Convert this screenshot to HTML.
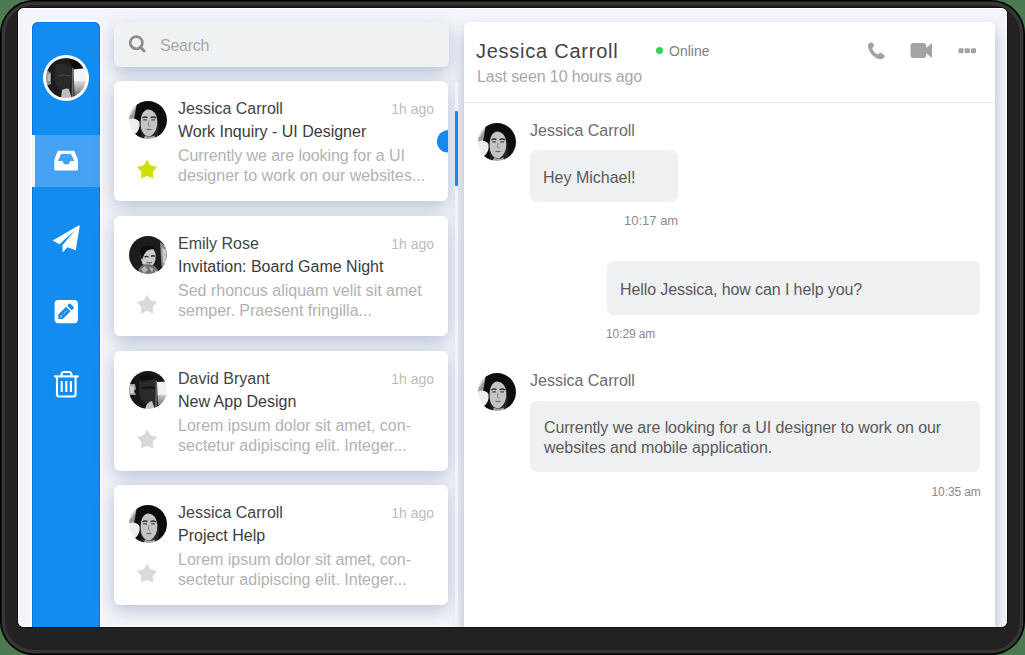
<!DOCTYPE html>
<html><head><meta charset="utf-8">
<style>
*{box-sizing:border-box;margin:0;padding:0}
html,body{width:1025px;height:655px;overflow:hidden;background:#4c7a51}
body{font-family:"Liberation Sans",sans-serif;position:relative}
.abs{position:absolute}
#frame{left:0;top:0;width:1025px;height:655px;border-radius:34px;background:#363636;box-shadow:inset 0 0 0 1.6px #000}
#frame2{left:5px;top:5px;width:1015px;height:645px;border-radius:29px;background:#222}
#app{left:18px;top:8px;width:989px;height:619px;border-radius:6px;background:#f4f5fa;overflow:hidden;box-shadow:0 0 0 1px #111,inset 0 0 0 1px #fff}
#side{left:14px;top:14px;width:68px;height:620px;background:#138cf0;border-radius:6px 6px 0 0;box-shadow:0 0 0 1.5px #fff,inset 0 0 0 1px #0a74ea}
#me{left:11px;top:33px;width:46px;height:46px;border-radius:50%;background:#fff;padding:3px}
#me svg{display:block;border-radius:50%;overflow:hidden}
#active{left:0;top:113px;width:68px;height:52px;background:#45a1f3;border-left:3px solid #f0f6fd}
.card{position:absolute;left:96px;width:334px;height:120px;background:#fff;border-radius:6px;box-shadow:0 5px 18px rgba(95,120,160,.42)}
.card .av{position:absolute;left:15px;top:20px;width:38px;height:38px;border-radius:50%;overflow:hidden}
.card .nm{position:absolute;left:64px;top:19px;font-size:16px;color:#444;white-space:nowrap}
.card .sb{position:absolute;left:64px;top:42.3px;font-size:16px;color:#3c3c3c;white-space:nowrap}
.card .pv{position:absolute;left:64px;top:65px;font-size:16px;line-height:19.5px;color:#b2b2b2;width:262px}
.card .tm{position:absolute;right:14px;top:19.5px;font-size:14px;color:#bcbcbc;white-space:nowrap}
.card .st{position:absolute;left:0;top:0;width:60px;height:110px}
#search{left:96px;top:14px;width:335px;height:45px;background:#eff1f3;border-radius:6px;box-shadow:0 6px 16px rgba(95,120,160,.4)}
#right{left:446px;top:14px;width:531px;height:620px;background:#fff;border-radius:6px;box-shadow:0 8px 14px rgba(100,125,170,.5)}
.bub{position:absolute;background:#eff0f2;border-radius:7px;color:#5a5a5a;font-size:16px;white-space:nowrap}
.ts{position:absolute;font-size:13px;color:#8a8a8a;white-space:nowrap}
.cname{position:absolute;font-size:16px;color:#6c6c6c;white-space:nowrap}
</style></head>
<body>
<div id="frame" class="abs"></div><div id="frame2" class="abs"></div>
<div id="app" class="abs">
  <!-- sidebar -->
  <div id="side" class="abs">
    <div id="active" class="abs"></div>
    <svg class="abs" style="left:0;top:0" width="68" height="400" viewBox="32 22 68 400">
      <!-- inbox -->
      <path fill="#fff" fill-rule="evenodd" d="M58.6 150.7 H73.3 Q74.2 150.7 74.6 151.5 L78 159.8 V169.2 Q78 170.4 76.8 170.4 H55.5 Q54.3 170.4 54.3 169.2 V159.8 L57.4 151.5 Q57.8 150.7 58.6 150.7 Z M61.1 154.1 H70.9 L74.4 161 H70.2 L68.9 164.3 H64 L62.4 161 H57.9 Z"/>
      <!-- plane -->
      <path fill="#fff" d="M52.6 240.6 L78.6 225.6 Q79.9 225 79.7 226.4 L75.7 250.3 L67.3 247.2 L62.7 252.4 L62.4 245.2 L74.8 230.6 L59.4 244.3 Z"/>
      <!-- edit -->
      <rect x="54.6" y="299.9" width="23.3" height="23.3" rx="3.6" fill="#fff"/>
      <g transform="translate(58.5 318.9) rotate(-45)">
        <path fill="#1589ef" d="M0 0 L2.6 -3.2 H13.9 V3.2 H2.6 Z"/>
        <rect x="15.4" y="-3.5" width="3.7" height="7" rx="1.6" fill="#1589ef"/>
        <path stroke="#fff" stroke-width="0.9" stroke-dasharray="1.2 0.8" d="M5.8 0 H12.2"/>
        <path stroke="#fff" stroke-width="0.9" d="M3.4 -1.4 V1.4"/>
      </g>
      <!-- trash -->
      <g fill="none" stroke="#fff" stroke-width="2.1">
        <path d="M54 376.4 H78.6"/>
        <path d="M61.6 376 V374.5 Q61.6 372 64 372 H69 Q71.4 372 71.4 374.5 V376"/>
        <path d="M57 377 V394.5 Q57 396.5 59 396.5 H73.6 Q75.6 396.5 75.6 394.5 V377"/>
        <path d="M61.7 381 V392 M66.3 381 V392 M70.9 381 V392"/>
      </g>
    </svg>
    <div id="me" class="abs"><svg width="40" height="40" viewBox="0 0 40 40"><defs><filter id="bm" x="-10%" y="-10%" width="120%" height="120%"><feGaussianBlur stdDeviation="0.5"/></filter><linearGradient id="gland" x1="0" y1="0" x2="0" y2="1"><stop offset="0" stop-color="#e0e0e0"/><stop offset="1" stop-color="#6e6e6e"/></linearGradient></defs><g filter="url(#bm)"><rect x="-3" y="-3" width="46" height="46" fill="#1a1a1a"/><path d="M27 11 L44 9.5 V23 H28Z" fill="#f5f5f5"/><path d="M28 23 H44 V36 L28.5 38Z" fill="url(#gland)"/><path d="M22 -3 L44 -3 V9.5 L27 11.5 Z" fill="#0f0f0f"/><path d="M-3 13 Q2 12 5 15 V26 Q2 28 -3 27Z" fill="#8e8e8e"/><path d="M1.5 16 H4 V23 H1.5Z" fill="#c2c2c2"/><path d="M9 7 Q18 3 25 9 L25.5 15 Q27.5 18.5 26 21 L24.5 22.5 Q25 28 22.5 31 Q17 34 11.5 30 Q7 23 9 7Z" fill="#2c2c2c"/><path d="M12 18 Q18 16.5 25 18" stroke="#474747" stroke-width="1" fill="none"/><path d="M26 9.5 L27.8 10.5 L27.5 40 H25.6Z" fill="#6a6a6a"/><path d="M16 32 Q20 29.5 23 31 L25.5 40 H15Z" fill="#bdbdbd"/></g></svg></div>
  </div>
  <!-- middle -->
  <div id="search" class="abs"><svg class="abs" style="left:14px;top:13px" width="20" height="20" viewBox="0 0 20 20"><circle cx="8.3" cy="7.7" r="6.1" fill="none" stroke="#8c8c8c" stroke-width="2.7"/><path d="M12.6 12.3 L16.2 16" stroke="#8c8c8c" stroke-width="2.8" stroke-linecap="round"/></svg><div class="abs" style="left:46px;top:14.5px;font-size:16px;color:#a8a8a8;letter-spacing:-0.25px">Search</div></div>
  <div class="abs" style="left:437px;top:74px;width:3px;height:545px;background:#f0f2f7;z-index:4"></div>
  <div class="abs" style="left:437px;top:103px;width:3px;height:75px;background:#1589ef;border-radius:1px;z-index:4"></div>
  <div class="abs" style="left:418.5px;top:121.5px;width:23px;height:23px;border-radius:50%;background:#1589ef;clip-path:inset(0 11.5px 0 0);z-index:5"></div>
  <div class="card" style="top:73px">
    <div class="av"><svg width="38" height="38" viewBox="0 0 38 38"><defs><filter id="bj1" x="-10%" y="-10%" width="120%" height="120%"><feGaussianBlur stdDeviation="0.5"/></filter></defs><g filter="url(#bj1)"><rect x="-2" y="-2" width="42" height="42" fill="#262626"/><path d="M-2 -2 H16 L11 8 L6 18 H-2Z" fill="#9a9a9a"/><path d="M-2 -2 H10 L6 8 L2 14 H-2Z" fill="#cdcdcd"/><path d="M8 1 Q19 -3 31 4 L38 12 V40 H28 Q31 30 29 20 Q28 10 19.5 9 Q13 10 11.5 19 Q10.5 27 12.5 34 L10 40 H5 Q2 28 6 13Z" fill="#101010"/><path d="M19.5 8.5 Q27.5 9.5 28.3 20 Q28.8 31 21 35.5 Q14.5 35.5 12.2 28 Q10.8 20 13 13.5 Q15.5 8.5 19.5 8.5Z" fill="#c4c4c4"/><path d="M13.5 16.8 Q16 15.3 18.5 16.6 M21.5 16.6 Q24.5 15.3 27 16.8" stroke="#2e2e2e" stroke-width="1.5" fill="none"/><path d="M14.2 18.8 H18 M22.3 18.8 H26" stroke="#4a4a4a" stroke-width="1.3"/><path d="M20 20 L19.3 24.5 Q20.3 25.5 21.5 24.6" stroke="#8a8a8a" stroke-width="1" fill="none"/><path d="M16.5 28.3 Q20 27.2 23.5 28.3 Q20 30 16.5 28.3Z" fill="#6a6a6a"/><path d="M-2 19 Q6 15 10.5 21 Q11.5 29 6 33 Q1 34.5 -2 31Z" fill="#eeeeee"/><path d="M16 34.5 Q20.5 37 25.5 34.5 L27 40 H14Z" fill="#a8a8a8"/></g></svg></div>
    <div class="nm">Jessica Carroll</div>
    <div class="tm">1h ago</div>
    <div class="sb">Work Inquiry - UI Designer</div>
    <div class="pv"><span style="letter-spacing:-0.08px">Currently we are looking for a UI</span><br>designer to work on our websites...</div>
    <div class="st"><svg width="60" height="110" viewBox="0 0 60 110"><path d="M33.1 79.3 L36.1 84.6 L42.6 86.2 L38.4 90.9 L38.8 97 L33.1 94.5 L27.4 97 L27.8 90.9 L23.6 86.2 L30.1 84.6Z" fill="#cfdf00" stroke="#cfdf00" stroke-width="0.8" stroke-linejoin="round"/></svg></div>
  </div>
  <div class="card" style="top:208px">
    <div class="av"><svg width="38" height="38" viewBox="0 0 38 38"><defs><filter id="be2" x="-10%" y="-10%" width="120%" height="120%"><feGaussianBlur stdDeviation="0.5"/></filter></defs><g filter="url(#be2)"><rect x="-2" y="-2" width="42" height="42" fill="#1e1e1e"/><path d="M31 6 Q37 10 39 16 V32 Q35 34 32.5 30Z" fill="#8c8c8c"/><path d="M33 12 L37 14 V28 L34 27Z" fill="#c8c8c8"/><path d="M17.5 10.5 Q25 10.5 26.5 17.5 Q27.5 26 23 30 Q17.5 32 13.5 28 Q11 22.5 12 15.5 Q13.5 11 17.5 10.5Z" fill="#cacaca"/><path d="M11.5 12.5 Q19 6 28 13.5 Q22.5 12.5 18.5 14.5 Q15 17 13 24 Q10 18 11.5 12.5Z" fill="#0e0e0e"/><path d="M15.5 21 Q17.5 19.8 19.5 21 M22 20.3 Q24 19.2 26 20.3" stroke="#2a2a2a" stroke-width="1.4" fill="none"/><path d="M17.5 26.5 Q20.5 27.5 23 26.3" stroke="#555" stroke-width="1.2" fill="none"/><path d="M8 40 Q9 31 14.5 28.5 Q20 27.5 24.5 29.5 Q30 33 31 40Z" fill="#707070"/><path d="M12 33 L16 30 L19 34 L15 37Z M20 31 L24.5 32.5 L23 36.5 Z M26 34 L29 36 L26 38Z" fill="#b4b4b4"/></g></svg></div>
    <div class="nm">Emily Rose</div>
    <div class="tm">1h ago</div>
    <div class="sb">Invitation: Board Game Night</div>
    <div class="pv">Sed rhoncus aliquam velit sit amet semper. Praesent fringilla...</div>
    <div class="st"><svg width="60" height="110" viewBox="0 0 60 110"><path d="M33.1 79.3 L36.1 84.6 L42.6 86.2 L38.4 90.9 L38.8 97 L33.1 94.5 L27.4 97 L27.8 90.9 L23.6 86.2 L30.1 84.6Z" fill="#d9d9d9" stroke="#d9d9d9" stroke-width="0.8" stroke-linejoin="round"/></svg></div>
  </div>
  <div class="card" style="top:343px">
    <div class="av"><svg width="38" height="38" viewBox="0 0 38 38"><defs><filter id="bd3" x="-10%" y="-10%" width="120%" height="120%"><feGaussianBlur stdDeviation="0.55"/></filter><linearGradient id="gd3" x1="0" y1="0" x2="0" y2="1"><stop offset="0" stop-color="#c8c8c8"/><stop offset="1" stop-color="#7a7a7a"/></linearGradient></defs><g filter="url(#bd3)"><rect x="-2" y="-2" width="42" height="42" fill="#171717"/><path d="M28 11 Q33 10.5 40 11 V24 H28.5Z" fill="#f2f2f2"/><path d="M28.5 24 H40 V33 L29 34Z" fill="url(#gd3)"/><path d="M-2 13 H6 L7 18 L5 20 L7 24 H-2Z" fill="#a0a0a0"/><path d="M1 15 H5 V22 H1Z" fill="#cfcfcf"/><path d="M11 7 Q20 3 26 9 Q28 16 27 22 Q27 29 24 32 Q17 34 12 29 Q9 21 11 7Z" fill="#2c2c2c"/><path d="M10 6 Q19 1 27 8 Q20 8 13 11 Z" fill="#0f0f0f"/><path d="M14 17 Q20 15.5 26 17.5" stroke="#0c0c0c" stroke-width="1.6" fill="none"/><path d="M26.5 9 L28 10 V38 L26 36Z" fill="#5e5e5e"/><path d="M18 33 Q21 30 23 30 L26 38 H16Z" fill="#c6c6c6"/></g></svg></div>
    <div class="nm">David Bryant</div>
    <div class="tm">1h ago</div>
    <div class="sb">New App Design</div>
    <div class="pv">Lorem ipsum dolor sit amet, con-<br>sectetur adipiscing elit. Integer...</div>
    <div class="st"><svg width="60" height="110" viewBox="0 0 60 110"><path d="M33.1 79.3 L36.1 84.6 L42.6 86.2 L38.4 90.9 L38.8 97 L33.1 94.5 L27.4 97 L27.8 90.9 L23.6 86.2 L30.1 84.6Z" fill="#d9d9d9" stroke="#d9d9d9" stroke-width="0.8" stroke-linejoin="round"/></svg></div>
  </div>
  <div class="card" style="top:477px">
    <div class="av"><svg width="38" height="38" viewBox="0 0 38 38"><defs><filter id="bj4" x="-10%" y="-10%" width="120%" height="120%"><feGaussianBlur stdDeviation="0.5"/></filter></defs><g filter="url(#bj4)"><rect x="-2" y="-2" width="42" height="42" fill="#262626"/><path d="M-2 -2 H16 L11 8 L6 18 H-2Z" fill="#9a9a9a"/><path d="M-2 -2 H10 L6 8 L2 14 H-2Z" fill="#cdcdcd"/><path d="M8 1 Q19 -3 31 4 L38 12 V40 H28 Q31 30 29 20 Q28 10 19.5 9 Q13 10 11.5 19 Q10.5 27 12.5 34 L10 40 H5 Q2 28 6 13Z" fill="#101010"/><path d="M19.5 8.5 Q27.5 9.5 28.3 20 Q28.8 31 21 35.5 Q14.5 35.5 12.2 28 Q10.8 20 13 13.5 Q15.5 8.5 19.5 8.5Z" fill="#c4c4c4"/><path d="M13.5 16.8 Q16 15.3 18.5 16.6 M21.5 16.6 Q24.5 15.3 27 16.8" stroke="#2e2e2e" stroke-width="1.5" fill="none"/><path d="M14.2 18.8 H18 M22.3 18.8 H26" stroke="#4a4a4a" stroke-width="1.3"/><path d="M20 20 L19.3 24.5 Q20.3 25.5 21.5 24.6" stroke="#8a8a8a" stroke-width="1" fill="none"/><path d="M16.5 28.3 Q20 27.2 23.5 28.3 Q20 30 16.5 28.3Z" fill="#6a6a6a"/><path d="M-2 19 Q6 15 10.5 21 Q11.5 29 6 33 Q1 34.5 -2 31Z" fill="#eeeeee"/><path d="M16 34.5 Q20.5 37 25.5 34.5 L27 40 H14Z" fill="#a8a8a8"/></g></svg></div>
    <div class="nm">Jessica Carroll</div>
    <div class="tm">1h ago</div>
    <div class="sb">Project Help</div>
    <div class="pv">Lorem ipsum dolor sit amet, con-<br>sectetur adipiscing elit. Integer...</div>
    <div class="st"><svg width="60" height="110" viewBox="0 0 60 110"><path d="M33.1 79.3 L36.1 84.6 L42.6 86.2 L38.4 90.9 L38.8 97 L33.1 94.5 L27.4 97 L27.8 90.9 L23.6 86.2 L30.1 84.6Z" fill="#d9d9d9" stroke="#d9d9d9" stroke-width="0.8" stroke-linejoin="round"/></svg></div>
  </div>
  <!-- right -->
  <div id="right" class="abs">
    <div class="abs" style="left:12px;top:17.5px;font-size:20px;letter-spacing:0.75px;color:#444;white-space:nowrap">Jessica Carroll</div>
    <div class="abs" style="left:192px;top:24.8px;width:7px;height:7px;border-radius:50%;background:#2ed25c"></div>
    <div class="abs" style="left:205px;top:20.7px;font-size:14px;color:#808080;white-space:nowrap">Online</div>
    <div class="abs" style="left:13px;top:45.5px;font-size:16px;color:#a8a8a8;letter-spacing:-0.1px;white-space:nowrap">Last seen 10 hours ago</div>
    <svg class="abs" style="left:-1px;top:0" width="532" height="60" viewBox="463 22 532 60">
      <path fill="#a3a3a3" d="M870.6 42.6 Q869 43.2 868.2 44.6 Q867.2 47.2 869.3 51 Q871.6 55 875.2 57.6 Q878.4 59.7 881 59.3 Q882.9 59 884.4 57.2 Q885.3 56 884.2 55 L881.5 52.9 Q880.5 52.2 879.6 53 L878.4 54.1 Q877.5 54.6 876.5 53.9 Q873.9 52 872.5 49.4 Q872 48.4 872.7 47.6 L873.6 46.6 Q874.3 45.7 873.7 44.6 L872.3 42.8 Q871.6 42.2 870.6 42.6Z"/>
      <rect x="910.5" y="42.9" width="15.8" height="15.2" rx="3" fill="#a3a3a3"/>
      <path fill="#a3a3a3" d="M925.5 48.4 L932 42.9 V58.1 L925.5 52.6Z"/>
      <rect x="958.6" y="48.2" width="5" height="5" rx="1" fill="#a3a3a3"/>
      <rect x="964.8" y="48.2" width="5" height="5" rx="1" fill="#a3a3a3"/>
      <rect x="971" y="48.2" width="5" height="5" rx="1" fill="#a3a3a3"/>
    </svg>
    <div class="abs" style="left:0;top:80px;width:531px;height:1px;background:#e8e8ea"></div>
    <div class="abs" style="left:14px;top:101px;width:38px;height:38px;border-radius:50%;overflow:hidden"><svg width="38" height="38" viewBox="0 0 38 38"><defs><filter id="bjr1" x="-10%" y="-10%" width="120%" height="120%"><feGaussianBlur stdDeviation="0.5"/></filter></defs><g filter="url(#bjr1)"><rect x="-2" y="-2" width="42" height="42" fill="#262626"/><path d="M-2 -2 H16 L11 8 L6 18 H-2Z" fill="#9a9a9a"/><path d="M-2 -2 H10 L6 8 L2 14 H-2Z" fill="#cdcdcd"/><path d="M8 1 Q19 -3 31 4 L38 12 V40 H28 Q31 30 29 20 Q28 10 19.5 9 Q13 10 11.5 19 Q10.5 27 12.5 34 L10 40 H5 Q2 28 6 13Z" fill="#101010"/><path d="M19.5 8.5 Q27.5 9.5 28.3 20 Q28.8 31 21 35.5 Q14.5 35.5 12.2 28 Q10.8 20 13 13.5 Q15.5 8.5 19.5 8.5Z" fill="#c4c4c4"/><path d="M13.5 16.8 Q16 15.3 18.5 16.6 M21.5 16.6 Q24.5 15.3 27 16.8" stroke="#2e2e2e" stroke-width="1.5" fill="none"/><path d="M14.2 18.8 H18 M22.3 18.8 H26" stroke="#4a4a4a" stroke-width="1.3"/><path d="M20 20 L19.3 24.5 Q20.3 25.5 21.5 24.6" stroke="#8a8a8a" stroke-width="1" fill="none"/><path d="M16.5 28.3 Q20 27.2 23.5 28.3 Q20 30 16.5 28.3Z" fill="#6a6a6a"/><path d="M-2 19 Q6 15 10.5 21 Q11.5 29 6 33 Q1 34.5 -2 31Z" fill="#eeeeee"/><path d="M16 34.5 Q20.5 37 25.5 34.5 L27 40 H14Z" fill="#a8a8a8"/></g></svg></div>
    <div class="cname" style="left:66px;top:100px">Jessica Carroll</div>
    <div class="bub" style="left:66px;top:128px;width:148px;height:52px;padding:18.7px 0 0 13px">Hey Michael!</div>
    <div class="ts" style="left:160px;top:191px;letter-spacing:0px">10:17 am</div>
    <div class="bub" style="left:143px;top:239px;width:373px;height:54px;padding:19.5px 0 0 13px;letter-spacing:-0.1px">Hello Jessica, how can I help you?</div>
    <div class="ts" style="left:142px;top:305px;font-size:12px;letter-spacing:-0.1px">10:29 am</div>
    <div class="abs" style="left:14px;top:351px;width:38px;height:38px;border-radius:50%;overflow:hidden"><svg width="38" height="38" viewBox="0 0 38 38"><defs><filter id="bjr2" x="-10%" y="-10%" width="120%" height="120%"><feGaussianBlur stdDeviation="0.5"/></filter></defs><g filter="url(#bjr2)"><rect x="-2" y="-2" width="42" height="42" fill="#262626"/><path d="M-2 -2 H16 L11 8 L6 18 H-2Z" fill="#9a9a9a"/><path d="M-2 -2 H10 L6 8 L2 14 H-2Z" fill="#cdcdcd"/><path d="M8 1 Q19 -3 31 4 L38 12 V40 H28 Q31 30 29 20 Q28 10 19.5 9 Q13 10 11.5 19 Q10.5 27 12.5 34 L10 40 H5 Q2 28 6 13Z" fill="#101010"/><path d="M19.5 8.5 Q27.5 9.5 28.3 20 Q28.8 31 21 35.5 Q14.5 35.5 12.2 28 Q10.8 20 13 13.5 Q15.5 8.5 19.5 8.5Z" fill="#c4c4c4"/><path d="M13.5 16.8 Q16 15.3 18.5 16.6 M21.5 16.6 Q24.5 15.3 27 16.8" stroke="#2e2e2e" stroke-width="1.5" fill="none"/><path d="M14.2 18.8 H18 M22.3 18.8 H26" stroke="#4a4a4a" stroke-width="1.3"/><path d="M20 20 L19.3 24.5 Q20.3 25.5 21.5 24.6" stroke="#8a8a8a" stroke-width="1" fill="none"/><path d="M16.5 28.3 Q20 27.2 23.5 28.3 Q20 30 16.5 28.3Z" fill="#6a6a6a"/><path d="M-2 19 Q6 15 10.5 21 Q11.5 29 6 33 Q1 34.5 -2 31Z" fill="#eeeeee"/><path d="M16 34.5 Q20.5 37 25.5 34.5 L27 40 H14Z" fill="#a8a8a8"/></g></svg></div>
    <div class="cname" style="left:66px;top:350.4px">Jessica Carroll</div>
    <div class="bub" style="left:66px;top:379px;width:450px;height:71px;padding:17px 0 0 14px;white-space:normal;line-height:20px;letter-spacing:-0.07px">Currently we are looking for a UI designer to work on our<br>websites and mobile application.</div>
    <div class="ts" style="left:467.5px;top:463px;font-size:12px;letter-spacing:-0.1px">10:35 am</div>
  </div>
</div>
</body></html>
